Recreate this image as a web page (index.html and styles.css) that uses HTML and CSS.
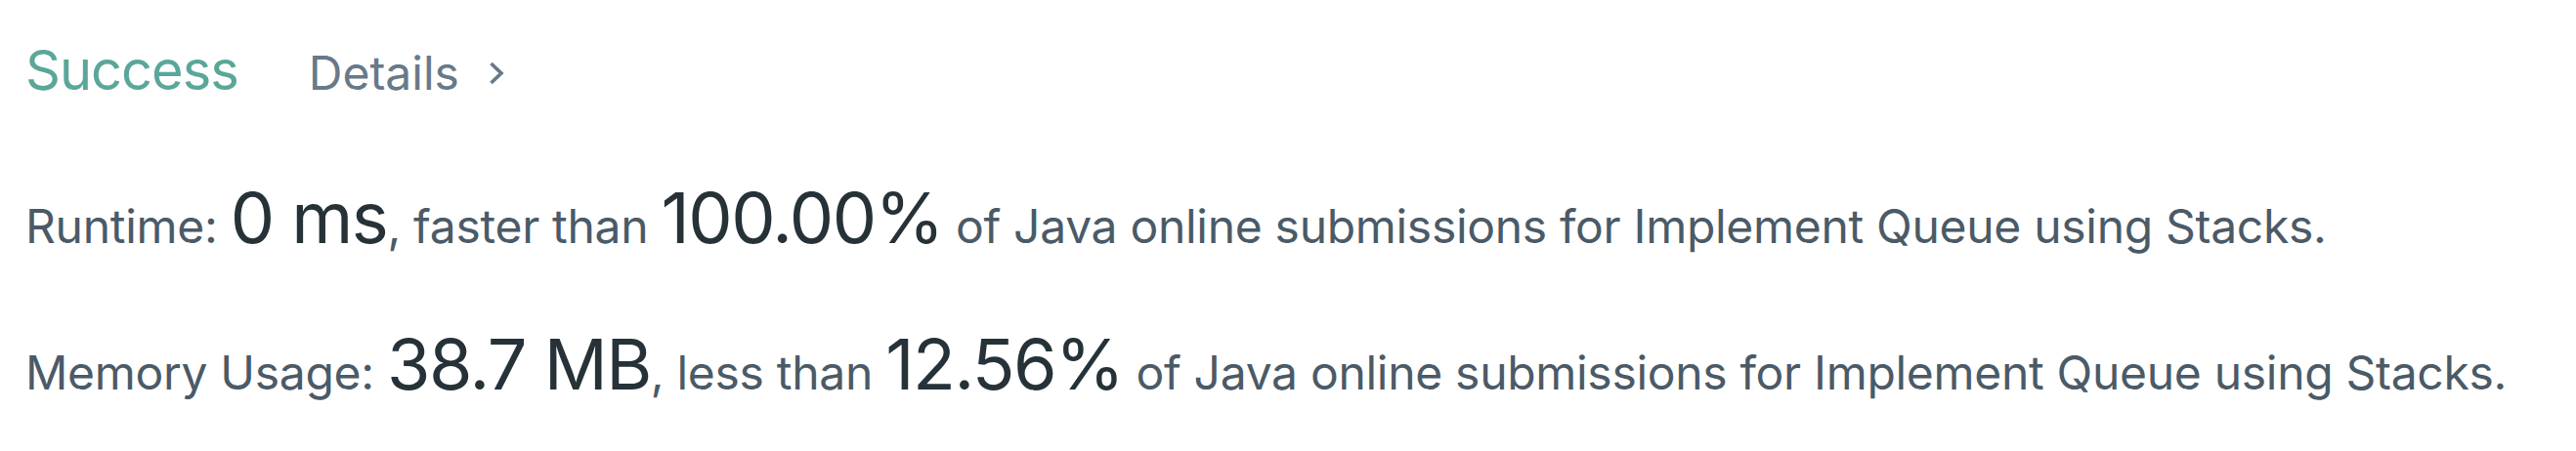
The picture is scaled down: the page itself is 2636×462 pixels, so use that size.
FILE: index.html
```html
<!DOCTYPE html>
<html lang="en">
<head>
<meta charset="utf-8">
<title>Submission Result</title>
<link rel="stylesheet" href="styles.css">
</head>
<body>
<div class="result">
  <div class="header">
    <span class="status">Success</span>
    <a class="details" href="#">Details<svg class="chevron" width="16" height="24" viewBox="0 0 16 24"><path d="M2.5 2 L13 12 L2.5 22" fill="none" stroke="currentColor" stroke-width="3.6" stroke-linecap="butt" stroke-linejoin="miter"/></svg></a>
  </div>
  <div class="stat">Runtime: <span class="big">0 ms</span>, faster than <span class="big">100.00%</span> of Java online submissions for Implement Queue using Stacks.</div>
  <div class="stat">Memory Usage: <span class="big">38.7 MB</span>, less than <span class="big">12.56%</span> of Java online submissions for Implement Queue using Stacks.</div>
</div>
</body>
</html>
```
FILE: styles.css
```css
html, body {
  margin: 0;
  padding: 0;
  background: #ffffff;
}
body {
  font-family: Inter, "Noto Sans", "Liberation Sans", sans-serif;
}
.result {
  padding: 32px 0 0 26px;
}
.header {
  display: flex;
  align-items: baseline;
  line-height: 80px;
  margin-bottom: 42px;
}
.status {
  font-size: 56px;
  letter-spacing: -1px;
  color: #5aa799;
}
.details {
  margin-left: 72px;
  font-size: 48px;
  color: #687988;
  text-decoration: none;
  display: inline-flex;
  align-items: baseline;
}
.chevron {
  margin-left: 30px;
  width: 16px;
  height: 24px;
  align-self: center;
}
.stat {
  font-size: 48px;
  letter-spacing: -0.3px;
  line-height: 150px;
  color: #4b5a67;
  white-space: nowrap;
}
.big {
  font-size: 72px;
  letter-spacing: -1.5px;
  line-height: 1;
  color: #263238;
}
```
